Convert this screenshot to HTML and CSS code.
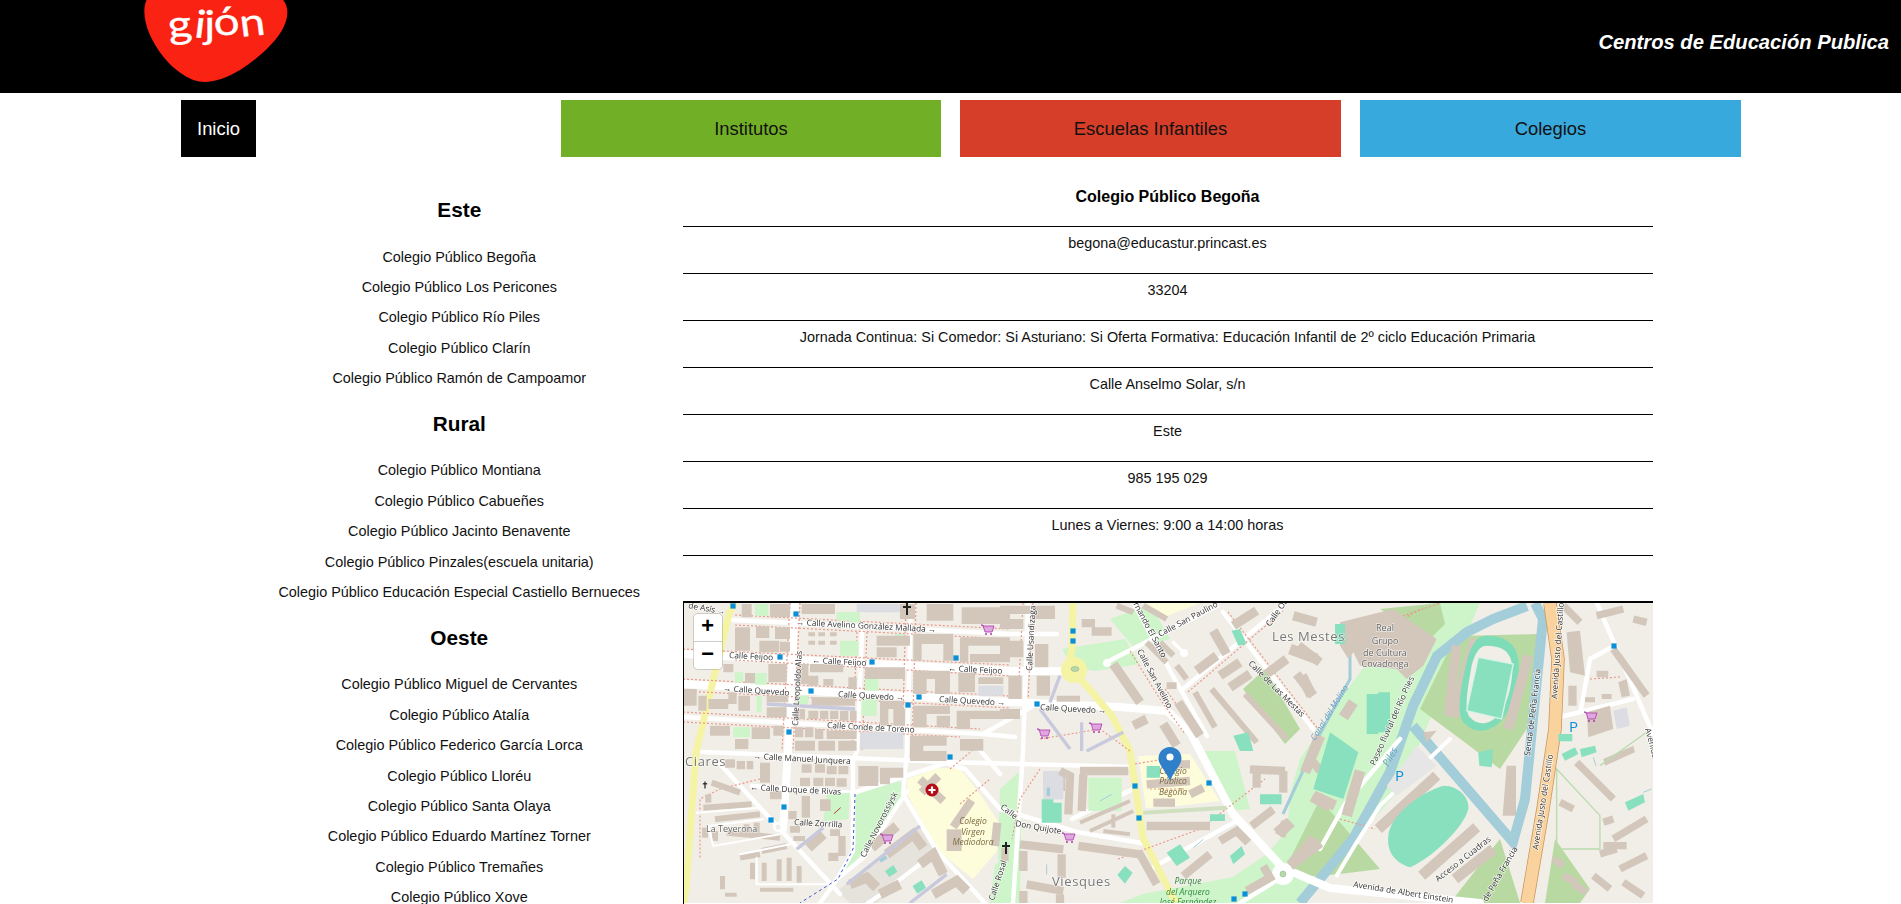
FILE: index.html
```html
<!DOCTYPE html>
<html lang="es">
<head>
<meta charset="utf-8">
<title>Centros de Educación Publica</title>
<link rel="stylesheet" href="styles.css">
</head>
<body>
<header class="top">
  <svg class="logo" viewBox="0 0 510 279" width="170" height="93" role="img" aria-label="Gijón">
    <path class="logo-blob" d="M52-5C38 20 40 60 60 105C85 160 130 215 190 240C230 255 280 240 330 210C400 165 470 100 472 40C473 20 465 5 455-5Z"/>
    <text class="logo-text" x="118" y="116" textLength="292" lengthAdjust="spacingAndGlyphs" rotate="-6 6 0 -6 -6" dy="0 -4 2 -6 2">gijón</text>
  </svg>
  <h1 class="top-title">Centros de Educación Publica</h1>
</header>
<nav class="nav">
  <a class="nav-item nav-home">Inicio</a>
  <a class="nav-item nav-green">Institutos</a>
  <a class="nav-item nav-red">Escuelas Infantiles</a>
  <a class="nav-item nav-blue">Colegios</a>
</nav>
<main class="main">
  <aside class="side">
    <h3>Este</h3>
    <ul>
      <li>Colegio Público Begoña</li>
      <li>Colegio Público Los Pericones</li>
      <li>Colegio Público Río Piles</li>
      <li>Colegio Público Clarín</li>
      <li>Colegio Público Ramón de Campoamor</li>
    </ul>
    <h3>Rural</h3>
    <ul>
      <li>Colegio Público Montiana</li>
      <li>Colegio Público Cabueñes</li>
      <li>Colegio Público Jacinto Benavente</li>
      <li>Colegio Público Pinzales(escuela unitaria)</li>
      <li>Colegio Público Educación Especial Castiello Bernueces</li>
    </ul>
    <h3>Oeste</h3>
    <ul>
      <li>Colegio Público Miguel de Cervantes</li>
      <li>Colegio Público Atalía</li>
      <li>Colegio Público Federico García Lorca</li>
      <li>Colegio Público Lloréu</li>
      <li>Colegio Público Santa Olaya</li>
      <li>Colegio Público Eduardo Martínez Torner</li>
      <li>Colegio Público Tremañes</li>
      <li>Colegio Público Xove</li>
    </ul>
  </aside>
  <section class="detail">
    <div class="row row-title">Colegio Público Begoña</div>
    <div class="row">begona@educastur.princast.es</div>
    <div class="row">33204</div>
    <div class="row">Jornada Continua: Si Comedor: Si Asturiano: Si Oferta Formativa: Educación Infantil de 2º ciclo Educación Primaria</div>
    <div class="row">Calle Anselmo Solar, s/n</div>
    <div class="row">Este</div>
    <div class="row">985 195 029</div>
    <div class="row">Lunes a Viernes: 9:00 a 14:00 horas</div>
    <div class="map">
      <svg class="map-svg" viewBox="684 604 970 300" width="970" height="300" aria-label="Mapa">
        <defs>
          <rect id="bus" x="-2.6" y="-2.6" width="5.2" height="5.2" class="bus"/>
          <g id="cart" class="cart"><path d="M-6-5h2l2 7h7l2-6h-11z"/><circle cx="-1" cy="4" r="1"/><circle cx="4" cy="4" r="1"/></g>
          <g id="cross" class="crossm"><rect x="-1" y="-6" width="2" height="12"/><rect x="-4" y="-3" width="8" height="2"/></g>
          <g id="crossmini" class="crossm"><rect x="-.6" y="-3.500" width="1.200" height="7"/><rect x="-2.200" y="-1.800" width="4.400" height="1.200"/></g>
        </defs>
        <rect class="land" x="684" y="604" width="970" height="300"/>

        <!-- areas -->
        <path class="green" d="M855 795L900 782L905 794L862 855L838 880L856 845Z"/>
        <path class="grey" d="M837 892L927 824L937 852L877 904H850Z"/>
        <path class="green" d="M1062 650L1125 640L1140 665L1095 672L1072 668Z"/>
        <path class="green" d="M1110 620L1150 605L1170 640L1135 650Z"/>
        <path class="green" d="M1000 790L1022 770L1020 904H1000L998 860Z"/>
        <path class="green" d="M1200 752H1235L1250 810L1230 812Z"/>
        <path class="school" d="M907 780L937 769L960 769L980 795L1000 825L997 852L973 880L938 852L907 795Z"/>
        <path class="school" d="M1138 757L1190 755L1220 802L1177 807L1146 809Z"/>
        <path class="school" d="M1143 604H1200L1160 620Z"/>
        <path class="green" d="M1120 904L1143 895L1233 878L1267 855L1287 832L1290 795L1300 760L1340 700L1400 620L1430 604H1480L1400 790L1300 904Z"/>
        <path class="green2" d="M1280 880L1320 800L1380 870L1340 875Z"/>
        <path class="green2" d="M1420 710L1447 655L1457 637L1540 635L1530 725L1500 770L1467 745Z"/>
        <path class="green2" d="M1450 904L1500 840L1520 904Z"/>
        <path class="green2" d="M1545 904L1555 840L1590 890L1580 904Z"/>
        <path class="green2" d="M1243 690L1265 670L1300 730L1285 745Z"/>
        <path class="green2" d="M1380 610L1440 604L1445 625L1430 640Z"/>

        <!-- water -->
        <path class="water" d="M1300 904L1353 840L1390 773L1413 707L1437 657L1467 633L1493 620L1527 607"/>
        <path class="water" d="M1413 727L1513 843L1525 800L1535 700L1543 620L1535 604"/>
        <path class="water thin" d="M1283 815L1320 735L1350 680L1350 640"/>

        <!-- roads -->
        <g class="rd" stroke-width="4.500">
          <path d="M733 621L1010 635L1057 635"/>
          <path d="M683 718L983 735L1015 738"/>
          <path d="M702 753L947 763L1132 768"/>
          <path d="M752 787L853 794L946 764L965 770L1000 810L1077 833L1147 845"/>
          <path d="M862 633L857 752L853 762L853 852L836 882L820 904"/>
          <path d="M911 604L907 752L903 795L937 852L985 904"/>
          <path d="M1028 604L1023 752L1013 904"/>
          <path d="M937 852L880 896L868 904"/>
          <path d="M975 745L1000 775"/>
          <path d="M983 735L1040 703"/>
          <path d="M1133 603L1173 677L1207 737"/>
          <path d="M1183 690L1283 607"/>
          <path d="M1223 613L1313 730"/>
          <path d="M1150 870L1240 820"/>
          <path d="M1072 820L1133 790"/>
          <path d="M1400 740L1345 805L1320 850"/>
          <path d="M1560 718L1633 700"/>
          <path d="M1614 647L1590 660L1581 710"/>
          <path d="M1597 604L1653 735"/>
          <path d="M1240 904L1287 875"/>
        </g>
        <g class="rd" stroke-width="8">
          <path d="M683 655L1010 672L1068 672"/>
          <path d="M683 685L1010 703L1120 708L1167 712L1190 733L1233 815L1283 869L1330 889L1480 904"/>
          <path d="M795 603L788 752L783 830"/>
        </g>
        <g class="rd" stroke-width="4.500">
          <path d="M1107 663L1217 607"/>
          <path d="M720 765L777 827L840 895"/>
          <path d="M907 792L863 859L837 880"/>
        </g>
        <circle class="rdc" cx="1107" cy="664" r="4"/>
        <circle class="rdc" cx="1184" cy="654" r="4"/>
        <g class="yl">
          <path d="M735 603L729 615L696 753L686 890L684 904"/>
          <path d="M1073 603L1072 650L1068 668L1085 685L1112 717L1130 752L1140 819L1143 839L1173 899L1178 904"/>
        </g>
        <circle class="yellowc" cx="1074" cy="671" r="13"/>
        <ellipse class="green-i" cx="1075" cy="670" rx="4" ry="2.5"/>
        <path class="orange-e" d="M1550 604L1558 660L1555 730L1543 810L1527 904"/>
        <path class="orange" d="M1550 604L1558 660L1555 730L1543 810L1527 904"/>
        <circle class="rdc big" cx="1283" cy="875" r="11"/>
        <circle class="green-i" cx="1283" cy="875" r="3"/>
        <circle class="rdc big" cx="778" cy="828" r="5"/>
        <circle class="land" cx="778" cy="828" r="2.5"/>

        <!-- footways -->
        <g class="foot">
          <path d="M735 616L1010 630"/><path d="M735 626L1010 640"/>
          <path d="M683 650L1010 666"/><path d="M735 661L1010 677"/>
          <path d="M683 680L1010 697"/><path d="M683 692L1010 709"/>
          <path d="M683 713L980 730"/><path d="M683 723L960 738"/>
          <path d="M800 604L793 752"/><path d="M790 604L782 752"/>
          <path d="M867 633L862 752"/><path d="M857 633L852 752"/>
          <path d="M916 604L912 752"/><path d="M906 604L902 752"/>
          <path d="M1033 604L1028 700"/><path d="M1023 604L1018 700"/>
          <path d="M1130 652L1160 700L1185 735"/><path d="M1165 690L1195 730"/>
          <path d="M1188 693L1283 612"/><path d="M1228 613L1318 730"/>
          <path d="M1040 740L1100 730L1130 752"/>
          <path d="M1135 765L1165 760"/><path d="M1150 790L1185 790"/>
          <path d="M1040 770L1020 800L1012 840"/><path d="M1118 860L1200 830L1265 780"/>
          <path d="M1370 640L1420 610"/><path d="M1340 820L1375 830"/>
          <path d="M1590 680L1620 678"/><path d="M760 780L720 790L700 800L700 860"/>
          <path d="M950 770L980 745"/><path d="M960 805L990 780"/>
          <path d="M1380 625L1440 604"/>
        </g>
        <path class="bluepath" d="M855 795L853 850L838 880L800 904"/>

        <!-- NW tile -->
        <g transform="translate(680 600) scale(.3333)">
          <path class="green" d="M225 15h40v35h-40zM470 40h40v25h-40zM510 40h30v30h-30zM480 125h55v45h-55zM165 220h25v30h-25zM225 222h35v35h-35zM555 240h40v35h-40zM350 290h35v25h-35zM545 300h45v50h-45zM160 385h50v30h-50zM645 105h25v35h-25zM230 290h15v50h-15z"/>
          <path class="bld" d="M185 15h30v40h-30zM270 15h60v40h-60zM365 15h100v30H365zM660 15h45v45h-45zM740 15h80v50h-80zM845 25h145v50H845zM165 85h45v70h-45zM228 82h40v35h-40zM285 85h45v35h-45zM238 125h60v35h-60zM300 128h30v30h-30zM385 100h20v12h-20zM415 100h20v12h-20zM450 100h20v12h-20zM385 125h20v12h-20zM415 125h20v12h-20zM450 125h20v12h-20zM590 110h100v30H590zM590 145h60v30h-60zM700 105h120v30H700zM700 135h25v50h-25zM790 135h30v50h-30zM840 115h150v25H840zM840 140h25v50h-25zM870 165h120v25H870zM130 195h30v25h-30zM195 222h30v30h-30zM265 195h55v55h-55zM355 195h30v60h-30zM390 195h100v25H390zM385 230h30v30h-30zM430 240h30v20h-30zM505 235h25v35h-25zM555 205h120v35H555zM700 215h110v25H700zM700 240h40v45h-40zM765 240h45v45h-45zM835 220h50v60h-50zM895 235h75v20h-75zM10 270h40v50H10zM55 290h25v45H55zM85 300h60v30H85zM145 280h25v35h-25zM175 290h35v45h-35zM260 290h65v20h-65zM395 295h130v25H395zM260 325h60v30h-60zM345 330h30v30h-30zM385 335h30v25h-30zM420 335h25v25h-25zM450 335h25v25h-25zM480 335h25v30h-25zM510 335h20v30h-20zM600 305h70v25h-70zM600 330h25v50h-25zM640 330h35v50h-35zM700 320h110v25H700zM700 345h40v40h-40zM770 350h40v35h-40zM830 335h150v25H830zM830 360h40v30h-40zM90 380h60v30H90zM215 385h55v35h-55zM165 420h40v30h-40zM280 380h30v30h-30zM345 385h25v30h-25zM375 385h25v30h-25zM405 390h25v30h-25zM440 395h90v25h-90zM345 425h60v30h-60zM415 425h50v30h-50zM475 425h55v30h-55zM690 410h110v30H690zM690 440h40v16h-40zM840 420h70v35h-70z"/>
          <path class="lilac" d="M530 15h130v25H530zM895 260h75v30h-75zM540 400h130v50H540z"/>
          <path class="lilacline" d="M260 315L525 330"/>
        </g>
        <!-- SW tile -->
        <g transform="translate(680 752) scale(.3333)">
          <path class="green" d="M440 130L510 125L505 205L430 210Z"/>
          <path class="bld" d="M135 25h30v25h-30zM170 30h25v25h-25zM200 30h20v25h-20zM240 35h30v60h-30zM365 40h30v25h-30zM405 40h30v25h-30zM440 45h30v25h-30zM475 45h30v25h-30zM360 80h30v25h-30zM400 80h30v25h-30zM435 80h30v25h-30zM470 82h30v25h-30zM535 45h60v60h-60zM600 50h30v50h-30zM630 50h40v30h-40zM690 0h110v30H690zM270 120h35v25h-35zM325 180h25v25h-25zM365 135h25v65h-25zM420 145h32v35h-32zM330 225h30v20h-30zM340 255h35v15h-35zM450 235h30v20h-30zM475 255h22v60h-22zM445 305h30v25h-30zM210 335h15v50h-15zM245 335h15v55h-15zM290 325h15v65h-15zM320 320h15v70h-15zM350 345h15v50h-15zM120 375h15v40h-15zM135 425h35v12h-35zM240 410h100v12H240z"/>
          <g class="bl" stroke-width="18">
            <path d="M95 95L180 125"/><path d="M70 170L215 160"/><path d="M85 130V155"/><path d="M105 205L240 190"/><path d="M140 245L300 260"/><path d="M180 320L240 310"/><path d="M245 300L320 285"/><path d="M75 230V260"/><path d="M105 240V270"/><path d="M200 220V250"/><path d="M230 215V245"/>
          </g>
          <g class="rd" stroke-width="6">
            <path d="M50 185L240 170"/><path d="M85 225L250 205"/><path d="M85 225L100 285L300 250"/><path d="M180 310L330 280"/><path d="M230 320V400H440"/>
          </g>
          <g class="bl" stroke-width="30">
            <path d="M575 290L650 225"/><path d="M620 310L700 250L730 290"/><path d="M510 400L560 380L590 410"/><path d="M720 340L760 310L790 370"/><path d="M600 430L660 400"/><path d="M760 430L830 390L860 420"/><path d="M385 290L430 250"/>
          </g>
          <path class="lilacline" d="M350 295L430 230"/>
          <path class="lilacline" d="M500 400L720 225"/>
          <path class="lilacline" d="M690 456L800 370"/>
          <path class="pitch" d="M615 360L640 342L652 362L628 378ZM698 405L725 388L738 410L712 428Z"/>
          <path class="water" d="M600 330L620 318" />
          <g class="bl" stroke-width="25">
            <path d="M720 85L790 150"/><path d="M775 75L725 125"/><path d="M875 148L820 228"/><path d="M952 215L945 285"/>
          </g>
          <path class="bld" d="M800 235h45v65h-45z"/>
          <path class="green-d" d="M930 456L945 340L990 320V456Z"/>
          <path class="bl" stroke-width="22" d="M975 290V330"/>
          <path class="redarrow" d="M462 188L482 170"/>
        </g>
        <!-- NE tile -->
        <g transform="translate(1000 600) scale(.3333)">
          <path class="bld" d="M0 20h90v25H0zM0 125h70v50H0zM105 135h40v70h-40zM105 20h60v40h-60zM25 230h40v70H25zM110 230h40v60h-40zM170 290h70v18h-70zM0 330h60v30H0zM245 60h40v25h-40zM275 85h60v25h-60zM0 60h70v30H0zM500 250h30v20h-30z"/>
          <g class="bl" stroke-width="28">
            <path d="M340 195L420 310"/><path d="M640 95L680 165"/><path d="M590 215L650 170"/><path d="M660 230L720 190"/><path d="M690 265L750 225"/><path d="M800 225L860 180"/><path d="M895 140L960 190"/><path d="M890 225L940 290"/><path d="M535 310L600 410"/><path d="M770 35L700 80"/><path d="M880 50L950 70"/><path d="M400 380L440 360"/><path d="M490 375L530 440"/>
          </g>
          <g class="bl" stroke-width="18">
            <path d="M585 280L645 385"/><path d="M635 270L770 430"/><path d="M735 285L860 420"/><path d="M440 130L500 190"/><path d="M480 130L520 170"/><path d="M430 20L500 60"/><path d="M350 20L400 40"/><path d="M530 200L560 240"/>
          </g>
          <path class="pitch" d="M695 95L720 90L740 135L715 140ZM700 410L745 400L760 456H720Z"/>
          <path class="lilacline" d="M120 330L210 450"/>
          <path class="lilacline" d="M180 230L150 310"/>
          <path class="lilacline" d="M245 370V456"/>
          <path class="lilacline" d="M260 456L370 400"/>
          <path class="rd" stroke-width="10" d="M520 130L550 160"/>
        </g>
        <!-- SE tile -->
        <g transform="translate(1000 752) scale(.3333)">
          <path class="bld" d="M130 60h65v60h-65z" />
          <path class="lilac" d="M130 60h60v85h-60z"/>
          <path class="water" d="M145 110V135"/>
          <path class="green" d="M265 80h100v100H265z"/>
          <g class="bl" stroke-width="25">
            <path d="M180 60L210 75L205 190"/><path d="M240 60L385 60"/><path d="M250 70L245 180"/><path d="M440 225H630"/><path d="M235 285L420 310L470 400"/><path d="M60 280L190 295"/><path d="M70 300V360"/><path d="M185 310V380"/><path d="M80 400L190 420"/><path d="M70 420V456"/><path d="M180 430V456"/><path d="M750 55L855 60"/><path d="M770 60V110"/><path d="M850 60V125"/><path d="M755 225L820 175"/><path d="M870 340L940 260"/><path d="M660 270L710 240L745 275"/><path d="M550 375L630 310"/><path d="M440 100L570 90"/><path d="M460 155H525"/><path d="M570 130L610 110"/><path d="M530 40L570 40"/><path d="M790 345L810 380L740 420"/><path d="M930 20L960 60"/><path d="M935 140L990 170"/>
          </g>
          <g class="bl" stroke-width="12">
            <path d="M240 215L390 150"/><path d="M270 240L400 180"/><path d="M310 240L390 250"/><path d="M340 190V230"/>
          </g>
          <path class="pitch" d="M125 145h35v70h-35zM160 155h25v60h-25zM440 45h40v35h-40zM352 372L375 345L398 365L375 398ZM500 305L540 280L570 320L530 345ZM690 315L725 285L735 310L700 340ZM780 130h65v30h-65zM630 190h45v20h-45z"/>
          <path class="bld" d="M820 235L860 200L885 225L845 260Z"/>
          <path class="green-line" d="M430 185L680 170"/>
          <path class="water thin" d="M300 150L335 130M580 290L610 265M140 340V370"/>
        </g>
        <!-- far right -->
        <g transform="translate(1280 590) scale(.3333)">
          <path class="bld" d="M180 100L340 60L470 150L430 230L380 270L350 240L240 230L220 190L205 210L180 170Z"/>
          <path class="pitch" d="M165 105h30v60h-30z"/>
          <path class="pitch" d="M260 315h35v120h-35zM295 310h35v120h-35z"/>
          <g class="bl" stroke-width="32">
            <path d="M120 440L75 550"/><path d="M100 620L165 650"/><path d="M240 545L200 680"/><path d="M220 340L190 385"/><path d="M30 180L110 210"/><path d="M65 260L95 320"/><path d="M470 560L295 720"/><path d="M590 715L425 860"/><path d="M640 780L525 870"/><path d="M20 700L0 740"/><path d="M120 760L30 830"/>
          </g>
          <path class="pitch" d="M100 600L190 630L235 490L150 430Z"/>
          <path class="stand" d="M585 150L520 385"/>
          <path class="trk" d="M620 140C710 140 730 200 710 300C680 430 590 450 550 400C530 370 540 300 560 220C570 170 590 140 620 140Z"/>
          <path class="landf" d="M620 170C690 170 710 210 690 300C665 410 600 420 570 385C550 360 565 290 575 230C585 190 600 170 620 170Z"/>
          <path class="pitch pstroke" d="M595 205L700 225L665 390L560 365Z"/>
          <path class="stand" d="M745 200L685 420"/>
          <g class="bl" stroke-width="28">
            <path d="M530 170L505 380"/>
          </g>
          <path class="pitch" d="M325 740C330 680 420 610 490 590C540 590 570 630 565 660C550 720 450 810 390 835C345 820 320 790 325 740Z"/>
          <path class="pitch" d="M595 490L640 480L635 535L598 530Z"/>
          <path class="bld" d="M680 530h28v150h-40z"/>
          <path class="rd" stroke-width="12" d="M510 450L300 650L230 760L170 860"/>
          <path class="lilacs" d="M320 590L410 470L470 530L350 620Z"/>
          <path class="bld" d="M430 430L470 425L440 460Z"/>
          <!-- right of avenue -->
          <path class="bld" d="M920 370L990 350L1000 420L925 445Z"/>
          <path class="lilac" d="M1000 365L1040 355L1050 410L1010 420Z"/>
          <path class="bld" d="M865 290h25v60h-25zM970 510L1060 470L1065 490L975 530ZM915 325h30v15h-30zM965 315h30v15h-30zM950 245h35v20h-35zM1015 280L1040 270L1050 320L1025 325ZM860 130L900 125L915 260L870 250Z"/>
          <g class="bl" stroke-width="22">
            <path d="M1000 180L1100 320"/><path d="M890 520L1000 630"/><path d="M970 700L1000 690"/><path d="M970 770H1040"/><path d="M1000 750L1100 690"/><path d="M820 810L850 830"/><path d="M850 860L890 880"/><path d="M880 885L920 910"/><path d="M940 860L990 900"/><path d="M1030 880L1090 920"/><path d="M950 80L1030 60"/><path d="M1060 90L1100 100"/><path d="M850 50L900 100"/><path d="M840 640L880 660"/>
            <path d="M960 795L1010 780"/><path d="M1020 840L1100 800"/>
          </g>
          <path class="pitch" d="M835 435h42v22h-42zM845 495L885 475L895 495L855 515ZM900 480L945 470L950 490L905 505ZM1035 640L1090 615L1095 640L1045 665Z"/>
          <path class="water thin" d="M940 505L948 530M1090 610L1115 600"/>
          <path class="greenbox" d="M830 540L960 680V780H830ZM960 530L1100 430"/>
        </g>

        <!-- stops, shops, crosses -->
        <use href="#bus" x="733" y="607"/><use href="#bus" x="796" y="615"/><use href="#bus" x="780" y="658"/><use href="#bus" x="872" y="663"/><use href="#bus" x="956" y="659"/><use href="#bus" x="811" y="692"/><use href="#bus" x="919" y="698"/><use href="#bus" x="908" y="706"/><use href="#bus" x="789" y="733"/><use href="#bus" x="950" y="758"/><use href="#bus" x="784" y="808"/><use href="#bus" x="771" y="821"/><use href="#bus" x="1073" y="632"/><use href="#bus" x="1073" y="642"/><use href="#bus" x="1037" y="705"/><use href="#bus" x="1135" y="787"/><use href="#bus" x="1139" y="819"/><use href="#bus" x="1209" y="784"/><use href="#bus" x="1234" y="900"/><use href="#bus" x="1245" y="895"/><use href="#bus" x="1614" y="647"/>
        <use href="#cart" x="987" y="631"/><use href="#cart" x="1043" y="735"/><use href="#cart" x="1095" y="729"/><use href="#cart" x="886" y="840"/><use href="#cart" x="1068" y="839"/><use href="#cart" x="1590" y="718"/>
        <use href="#cross" x="907" y="610"/><use href="#cross" x="1006" y="849"/><use href="#crossmini" x="705" y="786"/>
        <circle class="hosp" cx="932" cy="791" r="6.5"/><path class="hospw" d="M932 787.5V794.500M928.500 791H935.500"/>

        <!-- labels -->
        <g class="lab">
          <text transform="translate(688 609) rotate(10)">de Asís →</text>
          <text transform="translate(796 626) rotate(3)">→ Calle Avelino González Mallada →</text>
          <text transform="translate(729 659) rotate(3)">Calle Feijoo</text>
          <text transform="translate(812 664) rotate(3)">← Calle Feijoo</text>
          <text transform="translate(948 672) rotate(3)">← Calle Feijoo</text>
          <text transform="translate(798 727) rotate(-87)">Calle Leopoldo Alas</text>
          <text transform="translate(723 692) rotate(4)">→ Calle Quevedo</text>
          <text transform="translate(838 698) rotate(3)">Calle Quevedo →</text>
          <text transform="translate(939 703) rotate(3)">Calle Quevedo →</text>
          <text transform="translate(827 729) rotate(3)">Calle Conde de Toreno</text>
          <text transform="translate(753 760) rotate(3)">→ Calle Manuel Junquera</text>
          <text transform="translate(750 791) rotate(3)">← Calle Duque de Rivas</text>
          <text transform="translate(794 826) rotate(3)">Calle Zorrilla</text>
          <text transform="translate(865 859) rotate(-63)">Calle Novorossiysk</text>
          <text transform="translate(1000 809) rotate(38)">Calle</text>
          <text transform="translate(1015 827) rotate(10)">Don Quijote</text>
          <text transform="translate(994 902) rotate(-72)">Calle Rosal</text>
          <text transform="translate(1032 672) rotate(-87)">Calle Usandizaga</text>
          <text transform="translate(1040 711) rotate(3)">Calle Quevedo →</text>
          <text transform="translate(1129 597) rotate(62)">Fernando El Santo</text>
          <text transform="translate(1160 638) rotate(-28)">Calle San Paulino</text>
          <text transform="translate(1137 652) rotate(62)">Calle San Avelino</text>
          <text transform="translate(1248 665) rotate(45)">Calle de Las Mestas</text>
          <text transform="translate(1270 628) rotate(-55)">Calle Ob</text>
          <text transform="translate(1375 767) rotate(-66)">Paseo fluvial del Río Piles</text>
          <text transform="translate(1530 757) rotate(-83)">Senda de Peña Francia</text>
          <text transform="translate(1557 700) rotate(-86)">Avenida Justo del Castillo</text>
          <text transform="translate(1538 851) rotate(-81)">Avenida Justo del Castillo</text>
          <text transform="translate(1438 883) rotate(-38)">Acceso a Cuadras</text>
          <text transform="translate(1487 903) rotate(-60)">de Peña Francia</text>
          <text transform="translate(1353 888) rotate(9)">Avenida de Albert Einstein</text>
          <text transform="translate(1645 730) rotate(75)">Avenida</text>
        </g>
        <g class="place">
          <text class="big" x="685" y="767">Ciares</text>
          <text class="big" x="1052" y="887">Viesques</text>
          <text class="big" x="1272" y="642">Les Mestes</text>
          <text class="mid" x="706" y="833">La Teyerona</text>
          <text class="mid ctr" x="1385" y="632">Real</text>
          <text class="mid ctr" x="1385" y="645">Grupo</text>
          <text class="mid ctr" x="1385" y="657">de Cultura</text>
          <text class="mid ctr" x="1385" y="668">Covadonga</text>
        </g>
        <g class="poi">
          <text x="973" y="825">Colegio</text><text x="973" y="836">Virgen</text><text x="973" y="846">Mediodora</text>
          <text x="1173" y="775">Colegio</text><text x="1173" y="785">Público</text><text x="1173" y="796">Begoña</text>
        </g>
        <g class="poi park">
          <text x="1188" y="885">Parque</text><text x="1188" y="896">del Arquero</text><text x="1188" y="906">José Fernández</text>
        </g>
        <g class="wlab">
          <text transform="translate(1315 742) rotate(-58)">Canal del Molino</text>
          <text class="pile" transform="translate(1388 768) rotate(-60)">Piles</text>
        </g>
        <text class="parkp" x="1395" y="782">P</text>
        <text class="parkp" x="1569" y="733">P</text>

        <!-- marker -->
        <path class="pin" d="M1170 782C1166 772 1158.500 766 1158.500 759.500C1158.500 753 1163.500 748 1170 748C1176.500 748 1181.500 753 1181.500 759.500C1181.500 766 1174 772 1170 782Z"/>
        <circle class="pin-dot" cx="1170" cy="758" r="3.600"/>
      </svg>
      <div class="zoom">
        <a class="zoom-btn">+</a>
        <a class="zoom-btn">−</a>
      </div>
    </div>
  </section>
</main>
</body>
</html>
```
FILE: styles.css
```css
html, body { margin: 0; height: 100%; overflow: hidden; background: #fff; }
body { font-family: "Liberation Sans", Arial, sans-serif; color: #000; }

.top { height: 93px; background: #000; display: flex; align-items: center; justify-content: space-between; }
.logo { display: block; margin-left: 130px; align-self: flex-start; }
.logo-blob { fill: #f92213; }
.logo-text { font-family: "Lato", sans-serif; font-size: 116px; fill: #fff; stroke: #fff; stroke-width: 1px; }
.top-title { margin: 0 12px 9px 0; font-size: 20.200px; font-style: italic; font-weight: bold; color: #fff; }

.nav { display: flex; margin-top: 7px; padding-left: 181px; height: 57px; }
.nav-item { display: flex; align-items: center; justify-content: center; width: 380px; font-size: 18.400px; color: #111; margin-right: 19px; }
.nav-home { width: 75px; margin-right: 305px; background: #000; color: #fff; }
.nav-green { background: #71b026; }
.nav-red { background: #d63e2a; width: 381px; }
.nav-blue { background: #38a9dd; width: 381px; }

.main { display: flex; padding-left: 236px; }
.side { width: 446.500px; padding-top: 22.500px; text-align: center; font-size: 14.400px; color: #111; }
.side h3 { margin: 18.500px 0 19.500px; font-size: 20.800px; line-height: 24px; color: #000; }
.side ul { margin: 0; padding: 0; list-style: none; }
.side li { line-height: 30.400px; height: 30.400px; }

.detail { width: 970px; font-size: 14.400px; text-align: center; padding-top: 23.500px; color: #111; }
.row { box-sizing: border-box; height: 46.900px; padding-top: 8px; line-height: 16px; border-bottom: 1px solid #000; }
.row-title { font-weight: bold; font-size: 16px; color: #000; }

.map { position: relative; margin-top: 45.500px; height: 301px; border-top: 2px solid #000; border-left: 1px solid #000; overflow: hidden; }
.map-svg { display: block; filter: blur(.45px); }

.land, .landf { fill: #f1eee7; }
.green { fill: #cdf5c9; }
.green2 { fill: #b8d9a2; }
.green-d { fill: #cdf5c9; }
.green-i { fill: #b8d9a2; stroke: #8aa; stroke-width: .5px; }
.grey { fill: #e6e2dc; }
.school { fill: #fdfcdb; }
.bld { fill: #d3c7bc; }
.bl { fill: none; stroke: #d3c7bc; }
.stand { fill: none; stroke: #d3c7bc; stroke-width: 30px; }
.lilac { fill: #dcdde3; }
.lilacs { fill: #e6e6e6; }
.lilacline { fill: none; stroke: #c8c9dc; stroke-width: 10px; }
.pitch { fill: #88e0be; }
.pstroke { stroke: #d6f3e6; stroke-width: 4px; }
.trk { fill: #7fdcb8; }
.water { fill: none; stroke: #a3cdd9; stroke-width: 10px; }
.thin { stroke-width: 3px; }
.rd { fill: none; stroke: #fff; stroke-linecap: round; stroke-linejoin: round; }
.rdc { fill: #fff; }
.yl { fill: none; }
.yl path { stroke: #f5f3a4; stroke-width: 7px; stroke-linejoin: round; }
.yellowc { fill: #f5f3a4; }
.orange { fill: none; stroke: #f9d29d; stroke-width: 12px; }
.orange-e { fill: none; stroke: #c9955a; stroke-width: 13.500px; }
.foot { fill: none; stroke: #e9998c; stroke-width: 1.200px; stroke-dasharray: 2 2; }
.bluepath { fill: none; stroke: #3a55d8; stroke-width: 1px; stroke-dasharray: 3 3; }
.greenbox { fill: none; stroke: #b9dcae; stroke-width: 4px; }
.redarrow { fill: none; stroke: #c0392b; stroke-width: 3px; }
.green-line { fill: none; stroke: #cfe0c0; stroke-width: 12px; }
.bus { fill: #0a8fd8; }
.cart path { fill: #e0a6e0; stroke: #ac39ac; stroke-width: .8px; }
.cart circle { fill: #ac39ac; }
.crossm rect { fill: #222; }
.hosp { fill: #b40c14; }
.hospw { fill: none; stroke: #fff; stroke-width: 2.200px; }

.lab text { font-family: "Open Sans", "Noto Sans", sans-serif; font-size: 8.300px; fill: #333; stroke: #fff; stroke-width: 1.600px; stroke-opacity: .7; paint-order: stroke; }
.place text { font-family: "Open Sans", sans-serif; fill: #666; stroke: #fff; stroke-width: 1.500px; stroke-opacity: .6; paint-order: stroke; }
.place .big { font-size: 13px; letter-spacing: .6px; fill: #777; }
.place .mid { font-size: 9px; }
.place .ctr { text-anchor: middle; }
.poi text { font-family: "Open Sans", sans-serif; font-size: 8.500px; font-style: italic; fill: #7b6a40; text-anchor: middle; }
.park text { fill: #2d8a3e; }
.wlab text { font-family: "Open Sans", sans-serif; font-size: 8.500px; font-style: italic; fill: #6a9fc4; }
.wlab .pile { font-size: 10px; }
.parkp { font-family: "Open Sans", sans-serif; font-size: 15px; fill: #0a8fd8; }
.pin { fill: #2f80c8; }
.pin-dot { fill: #fff; }

.zoom { position: absolute; left: 10px; top: 11px; width: 28px; border-radius: 4px; background: #fff; box-shadow: 0 0 0 1px rgba(0,0,0,.15); }
.zoom-btn { display: block; height: 27px; text-align: center; font: bold 22px/27px "Liberation Mono", monospace; color: #000; }
.zoom-btn:first-child { border-bottom: 1px solid #ccc; }
```
